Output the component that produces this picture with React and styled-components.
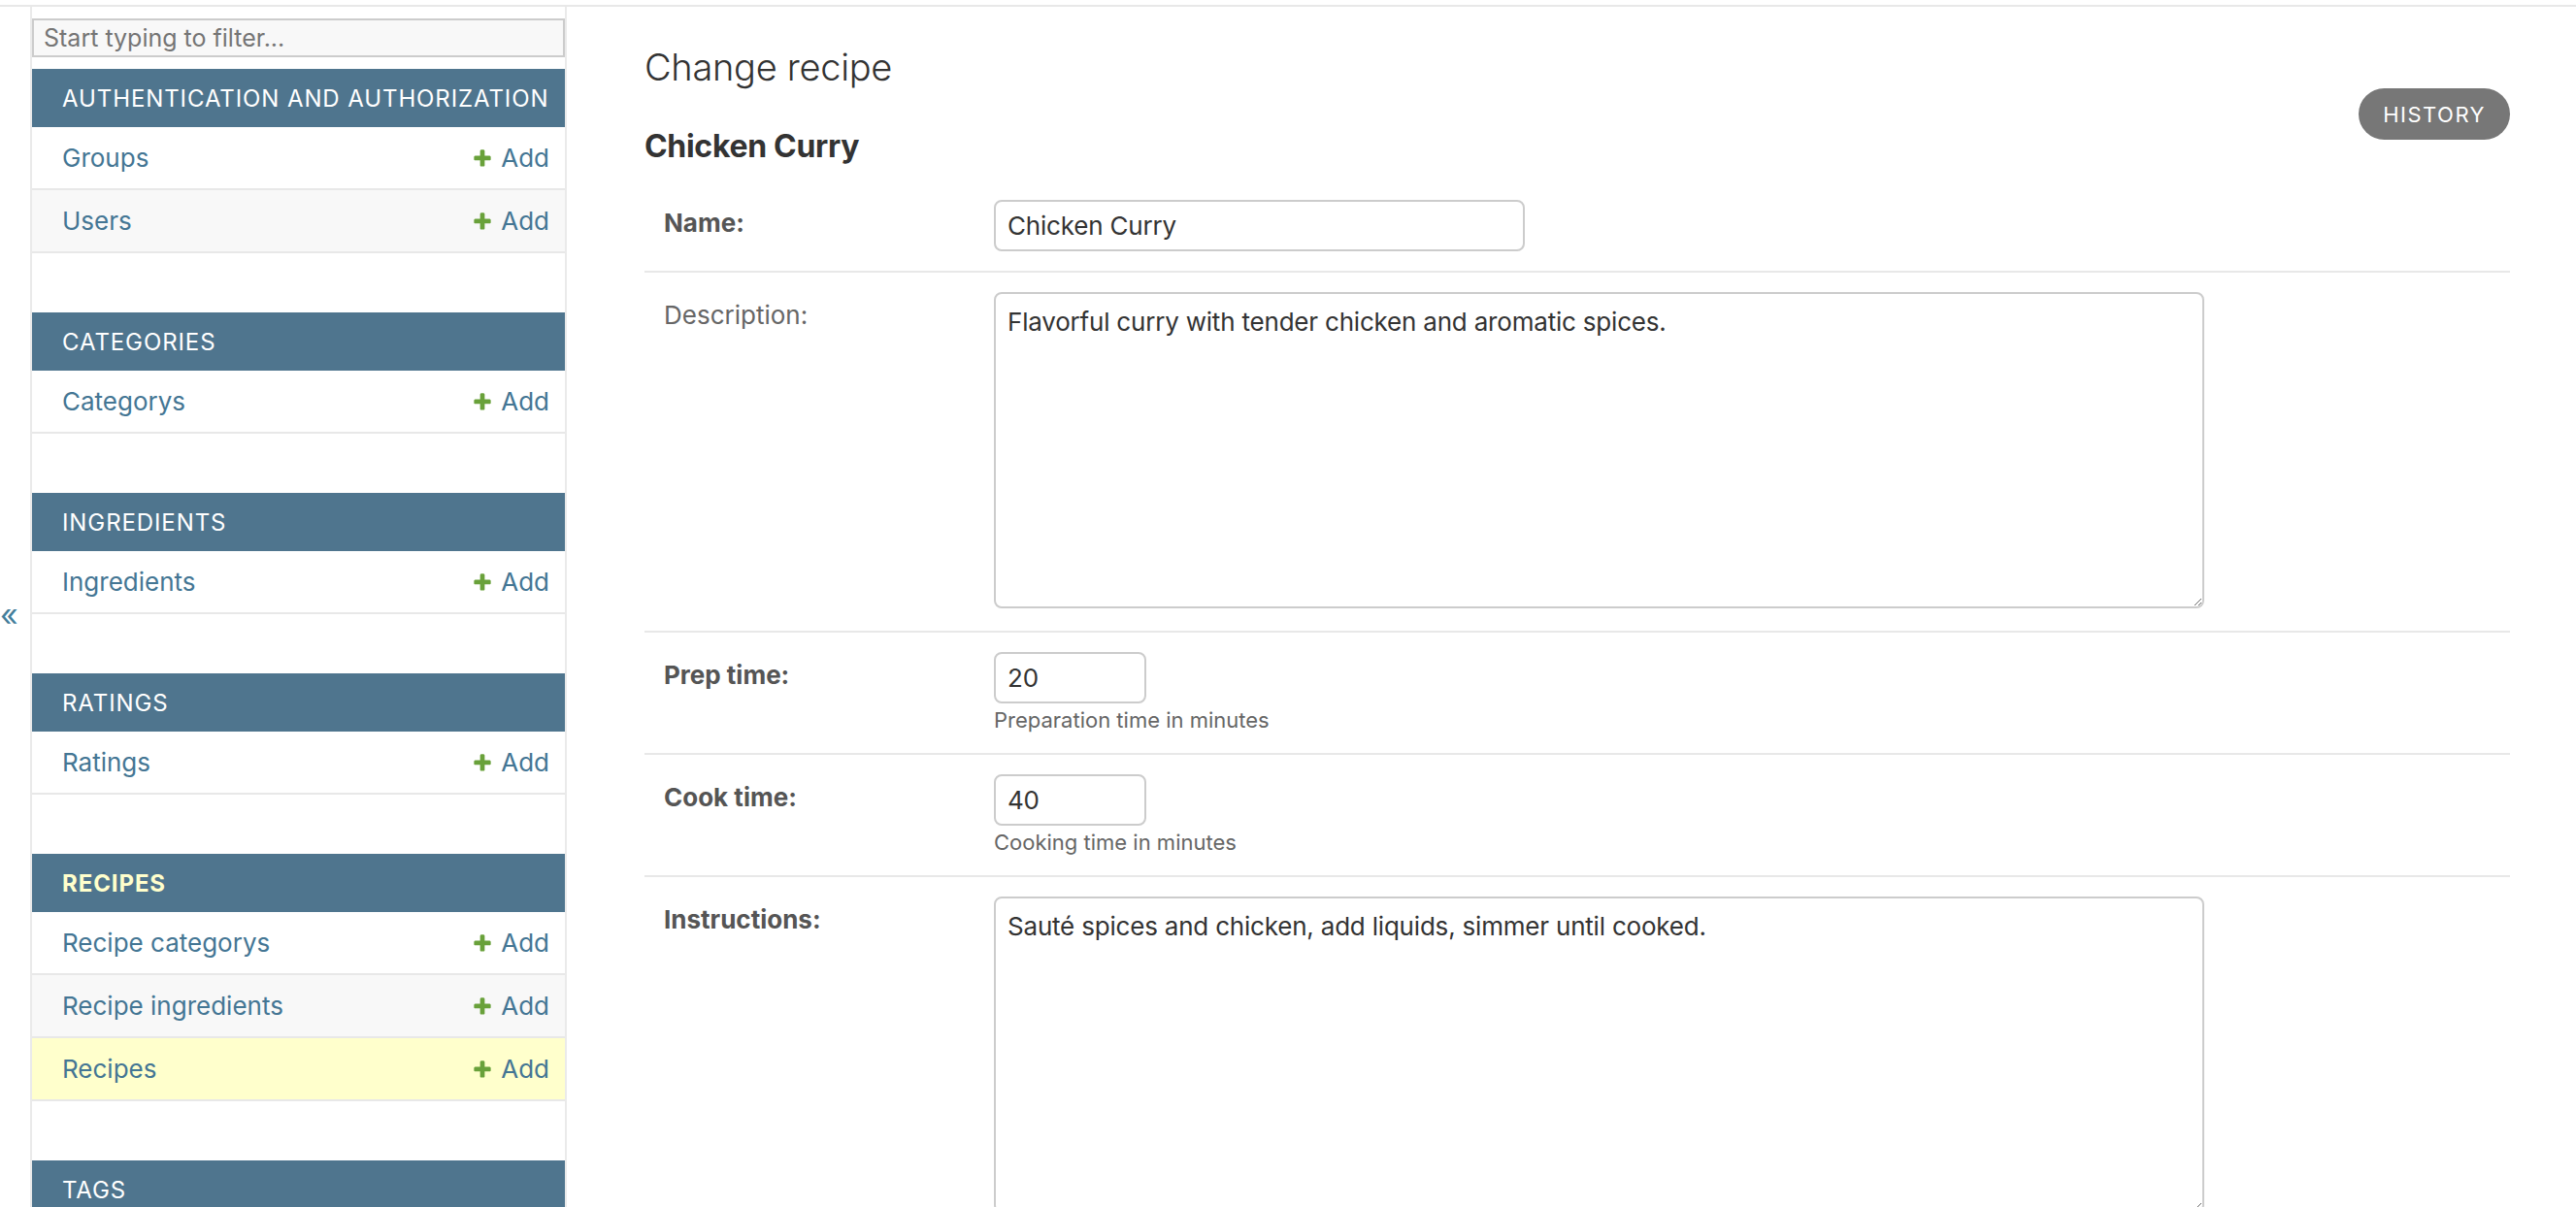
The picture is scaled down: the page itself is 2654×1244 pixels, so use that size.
import React from 'react';
import styled, { createGlobalStyle } from 'styled-components';

const GlobalStyle = createGlobalStyle`
  html, body {
    margin: 0;
    padding: 0;
    background: #fff;
  }
  body {
    font-family: Inter, "Noto Sans", sans-serif;
    color: #333;
    overflow: hidden;
  }
  * {
    box-sizing: border-box;
  }
`;

const TopRule = styled.div`
  height: 7px;
  border-bottom: 2px solid #e8e8e8;
`;

const Layout = styled.div`
  display: flex;
  height: 1237px;
  overflow: hidden;
`;

const Toggle = styled.button`
  width: 31px;
  flex-shrink: 0;
  height: 100%;
  display: flex;
  align-items: center;
  justify-content: flex-start;
  padding: 15px 0 0 0;
  border: none;
  background: transparent;
  color: #447e9b;
  font-family: Inter, sans-serif;
  font-size: 32px;
  cursor: pointer;
`;

const Sidebar = styled.nav`
  width: 553px;
  flex-shrink: 0;
  border-left: 2px solid #eaeaea;
  border-right: 2px solid #eaeaea;
  padding-top: 12px;
`;

const FilterInput = styled.input`
  display: block;
  width: 100%;
  height: 40px;
  margin: 0 0 12px;
  padding: 0 10px;
  border: 2px solid #ccc;
  background: #f8f8f8;
  font-family: Inter, sans-serif;
  font-size: 25px;
  color: #333;
  &::placeholder {
    color: #757575;
  }
`;

const Module = styled.section`
  margin-bottom: 61px;
`;

const Caption = styled.div`
  height: 60px;
  display: flex;
  align-items: center;
  padding-left: 31px;
  background: #4f758e;
  color: ${(p) => (p.$current ? '#ffffcc' : '#fff')};
  font-weight: ${(p) => (p.$current ? 700 : 400)};
  font-size: 24px;
  letter-spacing: 0.9px;
  text-transform: uppercase;
`;

const ModelRow = styled.div`
  height: 65px;
  display: flex;
  align-items: center;
  justify-content: space-between;
  padding: 0 16px 0 31px;
  border-bottom: 2px solid #e8e8e8;
  background: ${(p) => (p.$selected ? '#ffffcc' : p.$alt ? '#f8f8f8' : '#fff')};
`;

const ModelLink = styled.a`
  color: #447694;
  font-size: 26px;
  text-decoration: none;
`;

const AddLink = styled.a`
  display: flex;
  align-items: center;
  gap: 8px;
  color: #447694;
  font-size: 26px;
  text-decoration: none;
`;

const Content = styled.main`
  flex: 1;
  padding: 0 68px 0 80px;
`;

const Title = styled.h1`
  margin: 0;
  padding-top: 37px;
  font-size: 38px;
  font-weight: 300;
  line-height: 50px;
  letter-spacing: -0.3px;
  color: #333;
`;

const TitleRow = styled.div`
  display: flex;
  justify-content: space-between;
  align-items: flex-start;
  margin-top: -3px;
`;

const ObjectName = styled.h2`
  margin: 40px 0 0;
  font-size: 32px;
  font-weight: 700;
  line-height: 40px;
  letter-spacing: -0.3px;
  color: #333;
`;

const HistoryButton = styled.a`
  height: 53px;
  display: flex;
  align-items: center;
  padding: 0 25px;
  border-radius: 27px;
  background: #777;
  color: #fff;
  font-size: 22px;
  letter-spacing: 1.5px;
  text-transform: uppercase;
`;

const Fieldset = styled.div`
  margin-top: 15px;
`;

const FormRow = styled.div`
  display: flex;
  padding: 20px 0 ${(p) => p.$pb || 20}px 20px;
  border-bottom: 2px solid #e8e8e8;
`;

const Label = styled.label`
  width: 340px;
  flex-shrink: 0;
  padding-top: 8px;
  line-height: 32px;
  font-size: 26px;
  font-weight: ${(p) => (p.$required ? 700 : 400)};
  color: ${(p) => (p.$required ? '#555' : '#666')};
`;

const Field = styled.div`
  display: flex;
  flex-direction: column;
  align-items: flex-start;
`;

const TextInput = styled.input`
  width: ${(p) => p.$w}px;
  height: 53px;
  padding: 0 12px;
  border: 2px solid #ccc;
  border-radius: 8px;
  font-family: Inter, sans-serif;
  font-size: 26px;
  letter-spacing: -0.2px;
  color: #333;
  background: #fff;
`;

const TextArea = styled.textarea`
  display: block;
  width: 1247px;
  height: 326px;
  padding: 11px 12px;
  border: 2px solid #ccc;
  border-radius: 8px;
  font-family: Inter, sans-serif;
  font-size: 26px;
  line-height: 36px;
  letter-spacing: -0.2px;
  color: #333;
  background: #fff;
`;

const Help = styled.div`
  margin-top: 4px;
  font-size: 22px;
  line-height: 27px;
  color: #666;
`;

const PlusIcon = () => (
  <svg width="22" height="22" viewBox="0 0 1792 1792">
    <path
      fill="#69a13a"
      d="M1600 796v192q0 40-28 68t-68 28h-416v416q0 40-28 68t-68 28h-192q-40 0-68-28t-28-68v-416h-416q-40 0-68-28t-28-68v-192q0-40 28-68t68-28h416v-416q0-40 28-68t68-28h192q40 0 68 28t28 68v416h416q40 0 68 28t28 68z"
    />
  </svg>
);

const apps = [
  { name: 'Authentication and Authorization', models: ['Groups', 'Users'] },
  { name: 'Categories', models: ['Categorys'] },
  { name: 'Ingredients', models: ['Ingredients'] },
  { name: 'Ratings', models: ['Ratings'] },
  {
    name: 'Recipes',
    current: true,
    models: ['Recipe categorys', 'Recipe ingredients', 'Recipes'],
    selected: 'Recipes',
  },
  { name: 'Tags', models: ['Tags'] },
];

export default function App() {
  return (
    <>
      <GlobalStyle />
      <TopRule />
      <Layout>
        <Toggle>«</Toggle>
        <Sidebar>
          <FilterInput placeholder="Start typing to filter..." />
          {apps.map((app) => (
            <Module key={app.name}>
              <Caption $current={app.current}>{app.name}</Caption>
              {app.models.map((m, i) => (
                <ModelRow key={m} $alt={i % 2 === 1} $selected={app.selected === m}>
                  <ModelLink href="#">{m}</ModelLink>
                  <AddLink href="#">
                    <PlusIcon />
                    Add
                  </AddLink>
                </ModelRow>
              ))}
            </Module>
          ))}
        </Sidebar>
        <Content>
          <Title>Change recipe</Title>
          <TitleRow>
            <ObjectName>Chicken Curry</ObjectName>
            <HistoryButton>History</HistoryButton>
          </TitleRow>
          <Fieldset>
            <FormRow>
              <Label $required>Name:</Label>
              <Field>
                <TextInput $w={547} defaultValue="Chicken Curry" />
              </Field>
            </FormRow>
            <FormRow $pb={23}>
              <Label>Description:</Label>
              <Field>
                <TextArea defaultValue="Flavorful curry with tender chicken and aromatic spices." />
              </Field>
            </FormRow>
            <FormRow>
              <Label $required>Prep time:</Label>
              <Field>
                <TextInput $w={157} defaultValue="20" />
                <Help>Preparation time in minutes</Help>
              </Field>
            </FormRow>
            <FormRow>
              <Label $required>Cook time:</Label>
              <Field>
                <TextInput $w={157} defaultValue="40" />
                <Help>Cooking time in minutes</Help>
              </Field>
            </FormRow>
            <FormRow>
              <Label $required>Instructions:</Label>
              <Field>
                <TextArea defaultValue="Sauté spices and chicken, add liquids, simmer until cooked." />
              </Field>
            </FormRow>
          </Fieldset>
        </Content>
      </Layout>
    </>
  );
}
